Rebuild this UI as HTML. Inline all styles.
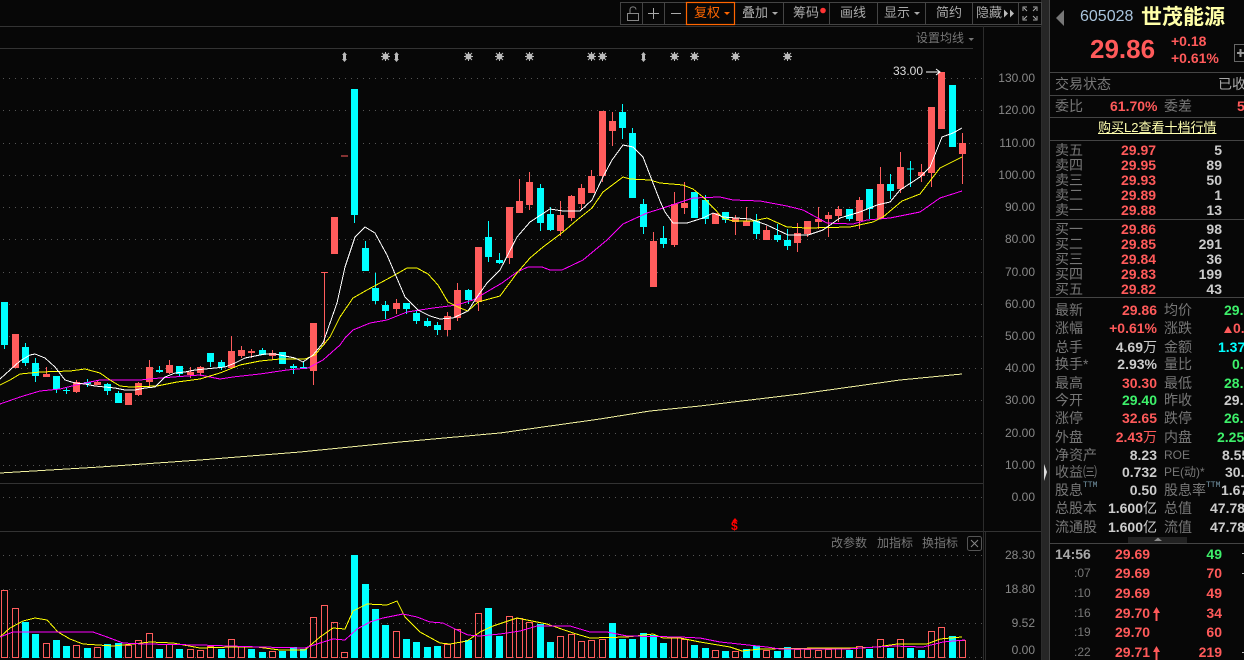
<!DOCTYPE html>
<html><head><meta charset="utf-8"><title>605028</title>
<style>
html,body{margin:0;padding:0;background:#070707;width:1244px;height:660px;overflow:hidden}
body{position:relative;font-family:"Liberation Sans","WenQuanYi Zen Hei","Noto Sans CJK SC",sans-serif;font-size:14px;color:#777}
svg{position:absolute;left:0;top:0}
span{position:absolute;line-height:16px;white-space:nowrap}
.l{left:1055px;color:#777;letter-spacing:0}
.m{left:1164px;color:#777}
.r{color:#ff5a5a;font-weight:bold}
.w{color:#ccc;font-weight:bold}
.g{color:#3df06a;font-weight:bold}
.c{color:#0ff;font-weight:bold}
.a{font-size:12px;color:#888;right:209px}
.t{font-size:13px;color:#aaa}
.p{left:1121px;font-size:14px}
.q{right:22px}
.v{right:87px}
.b{left:1115px;font-size:14px}
.u{font-size:12px;color:#777}
.ttm{font-size:8px;color:#79a;font-family:"Liberation Mono",monospace}
polyline{shape-rendering:crispEdges}
</style></head><body>
<svg width="1244" height="660" viewBox="0 0 1244 660" fill="none">
<defs>
<g id="s" stroke="#bbb" stroke-width="1"><circle r="3" fill="#bbb" stroke="none"/><path d="M-4.500 0H4.500M0-4.500V4.500M-3.500-3.500L3.500 3.500M-3.500 3.500L3.500-3.500"/></g>
<g id="d" fill="#bbb"><path d="M0-5L2.500-2H1.500V2H2.500L0 5L-2.500 2H-1.500V-2H-2.500Z"/></g>
</defs>
<!-- frame -->
<path d="M0 26.500H1042M0 48.500H973M0 483.500H983M0 531.500H1042" stroke="#333"/>
<path d="M983.500 26V660M985.500 532V660M1041.500 0V660" stroke="#2c2c2c"/>
<rect x="1042" y="0" width="7" height="660" fill="#262626"/>
<path d="M1049.500 0V660" stroke="#444"/>
<path d="M1044 464L1047 472L1044 481Z" fill="#ddd"/>
<!-- grid -->
<path d="M3 78.500H985M3 110.500H985M3 143.500H985M3 175.500H985M3 207.500H985M3 239.500H985M3 272.500H985M3 304.500H985M3 336.500H985M3 368.500H985M3 400.500H985M3 433.500H985M3 465.500H985M3 497.500H985M3 555.500H985M3 589.500H985M3 623.500H985M3 657.500H985" stroke="#555" stroke-dasharray="1 5"/>
<!-- long MA -->
<polyline stroke="#f2f2a0" points="0,473 100,467 200,460 300,452 400,442 500,433 600,419 650,411 700,406 800,394 900,380 962,374"/>
<!-- candles -->
<g shape-rendering="crispEdges">
<path stroke="#ff5c5c" d="M46.500 367V377M76.500 380V393M97.500 380V385M138.500 382V396M149.500 360V386M169.500 360V374M190.500 367V378M200.500 366V376M231.500 336V369M241.500 346V358M251.500 349V358M272.500 350V360M313.500 323V385M324.500 272V345M396.500 299V314M447.500 312V336M457.500 283V321M478.500 247V311M509.500 207V264M519.500 179V213M529.500 172V210M560.500 201V236M571.500 195V221M581.500 184V210M591.500 170V176M602.500 176V182M612.500 112V146M653.500 232V241M674.500 192V247M684.500 182V214M735.500 215V235M746.500 207V221M766.500 226V230M797.500 223V252M807.500 234V237M818.500 207V229M828.500 212V237M838.500 206V222M859.500 197V229M880.500 167V184M900.500 152V193M921.500 164V182M931.500 173V187M962.500 133V184"/>
<path stroke="#0ff" d="M4.500 345V349M25.500 343V366M35.500 358V382M56.500 389V393M66.500 388V394M87.500 379V387M107.500 383V395M118.500 391V393M159.500 366V373M179.500 374V376M210.500 362V367M221.500 360V370M262.500 348V350M293.500 364V374M303.500 362V367M354.500 215V223M365.500 241V248M375.500 273V304M385.500 301V319M406.500 309V314M416.500 310V324M427.500 318V327M437.500 322V335M468.500 289V304M488.500 221V262M499.500 253V264M540.500 184V231M550.500 207V231M622.500 104V139M632.500 128V133M643.500 199V234M663.500 226V248M705.500 195V224M725.500 220V223M756.500 214V239M777.500 224V242M787.500 229V250M849.500 219V221M869.500 209V219M890.500 174V199M910.500 161V187"/>
<path stroke="#ff5c5c" stroke-width="7" d="M15.500 334V368M46.500 374V377M76.500 382V392M97.500 382V385M128.500 393V405M138.500 383V395M149.500 367V382M169.500 365V373M190.500 372V375M200.500 367V373M231.500 351V368M241.500 350V356M251.500 351V353M272.500 353V356M313.500 323V371M324.500 272V273M334.500 217V254M344.500 155.500V156.500M396.500 303V309M447.500 316V330M457.500 290V318M478.500 247V302M509.500 207V258M519.500 201V213M529.500 182V205M560.500 215V231M571.500 196V218M581.500 188V204M591.500 176V193M602.500 111V176M612.500 121V131M653.500 241V287M674.500 204V245M684.500 203V208M715.500 213V224M735.500 218V222M746.500 221V226M766.500 230V240M797.500 233V243M807.500 221V234M818.500 219V222M828.500 215V219M838.500 209V216M859.500 200V221M880.500 184V219M900.500 167V189M921.500 172V176M931.500 107V173M941.500 72V129M962.500 143V154"/>
<path stroke="#0ff" stroke-width="7" d="M4.500 302V345M25.500 347V363M35.500 363V376M56.500 376V389M66.500 390V391M87.500 382V384M107.500 384V391M118.500 393V403M159.500 370V372M179.500 366V374M210.500 353V362M221.500 362V367M262.500 350V355M282.500 352V364M293.500 366V368M303.500 367V369M354.500 89V215M365.500 248V271M375.500 288V301M385.500 305V311M406.500 303V309M416.500 313V321M427.500 321V326M437.500 325V330M468.500 290V300M488.500 237V257M499.500 260V263M540.500 188V223M550.500 214V230M622.500 112V128M632.500 133V198M643.500 204V227M663.500 238V244M694.500 192V218M705.500 200V219M725.500 212V220M756.500 221V234M777.500 235V240M787.500 240V246M849.500 209V219M869.500 189V209M890.500 184V191M910.500 168.500V169.500M952.500 85V147"/>
</g>
<!-- MAs -->
<polyline stroke="#ff00ff" points="0,404 20,397 40,391 60,389 80,384 100,380 140,380 160,378 200,375 220,379 233,377 260,374 287,370 308,368 323,360 340,345 345,338 353,330 370,323 387,320 407,312 433,308 457,305 473,300 502,283 517,272 528,267 542,267 550,270 562,270 583,260 607,240 623,224 647,213 660,209 693,198 720,197 733,200 760,201 787,206 803,210 827,223 853,224 867,220 890,218 920,212 940,198 962,191"/>
<polyline stroke="#ffff00" points="0,385 10,380 20,374 40,372 70,371 85,369 100,373 110,380 120,386 130,387 157,386 177,382 200,379 220,373 240,365 260,361 280,359 305,359 315,355 330,337 340,317 353,298 367,290 393,276 407,268 417,268 428,274 438,285 448,302 460,308 468,311 478,302 500,296 517,273 530,258 543,247 563,232 577,220 592,208 603,192 623,177 630,179 650,180 660,183 683,185 693,189 703,197 723,218 733,221 753,221 767,218 787,227 807,228 850,227 873,222 883,217 902,201 920,194 940,168 962,157"/>
<polyline stroke="#fff" points="0,379 10,370 20,361 30,355 35,354 45,358 55,367 65,380 75,383 85,384 95,386 105,387 115,388 125,390 135,390 145,388 155,387 165,377 175,373 185,372 195,370 205,369 215,368 225,367 235,363 245,358 255,356 265,354 275,354 285,356 295,358 303,362 313,355 323,343 330,323 337,303 345,267 355,237 365,227 375,233 387,255 405,297 418,310 430,316 440,319 453,318 468,311 477,297 487,283 500,270 517,237 530,222 550,209 563,211 580,211 592,200 603,177 612,160 623,145 633,147 643,157 653,183 660,201 665,212 673,223 687,223 703,218 713,213 723,217 750,219 767,225 788,235 808,235 823,230 840,218 860,212 877,205 890,202 900,190 920,177 930,167 942,137 953,133 962,128"/>
<!-- markers -->
<use href="#d" x="344.500" y="57"/><use href="#s" x="385.500" y="56.500"/><use href="#d" x="396.500" y="57"/><use href="#s" x="468.500" y="56.500"/><use href="#s" x="499.500" y="56.500"/><use href="#s" x="529.500" y="56.500"/><use href="#s" x="591.500" y="56.500"/><use href="#s" x="602.500" y="56.500"/><use href="#d" x="643.500" y="57"/><use href="#s" x="674.500" y="56.500"/><use href="#s" x="694.500" y="56.500"/><use href="#s" x="735.500" y="56.500"/><use href="#s" x="787.500" y="56.500"/>
<path d="M926 72H940M936 69L940 72L936 75" stroke="#fff"/>
<!-- volume -->
<g shape-rendering="crispEdges">
<path stroke="#0ff" stroke-width="7" d="M25.500 622V658M35.500 634V658M56.500 640V658M66.500 646V658M87.500 648V658M107.500 644V658M118.500 643V658M159.500 649V658M179.500 649V658M221.500 649V658M251.500 649V658M262.500 652V658M282.500 651V658M293.500 647V658M303.500 649V658M354.500 555V658M365.500 584V658M375.500 609V658M385.500 625V658M406.500 639V658M416.500 642V658M427.500 647V658M437.500 646V658M468.500 640V658M488.500 608V658M499.500 636V658M540.500 624V658M550.500 642V658M612.500 623V658M622.500 639V658M632.500 639V658M643.500 633V658M653.500 635V658M663.500 643V658M694.500 645V658M705.500 648V658M725.500 651V658M746.500 649V658M756.500 646V658M777.500 651V658M787.500 647V658M849.500 650V658M869.500 649V658M890.500 648V658M910.500 648V658M921.500 650V658M952.500 636V658"/>
<path stroke="#ff5c5c" d="M1.500 590.500h6V657.500h-6zM12.500 608.500h6V657.500h-6zM43.500 643.500h6V657.500h-6zM73.500 645.500h6V657.500h-6zM94.500 647.500h6V657.500h-6zM125.500 645.500h6V657.500h-6zM135.500 640.500h6V657.500h-6zM146.500 633.500h6V657.500h-6zM166.500 644.500h6V657.500h-6zM187.500 649.500h6V657.500h-6zM197.500 650.500h6V657.500h-6zM207.500 646.500h6V657.500h-6zM228.500 639.500h6V657.500h-6zM238.500 646.500h6V657.500h-6zM269.500 651.500h6V657.500h-6zM310.500 617.500h6V657.500h-6zM321.500 605.500h6V657.500h-6zM331.500 622.500h6V657.500h-6zM341.500 652.500h6V657.500h-6zM393.500 631.500h6V657.500h-6zM444.500 644.500h6V657.500h-6zM454.500 629.500h6V657.500h-6zM475.500 613.500h6V657.500h-6zM506.500 616.500h6V657.500h-6zM516.500 618.500h6V657.500h-6zM526.500 622.500h6V657.500h-6zM557.500 636.500h6V657.500h-6zM568.500 634.500h6V657.500h-6zM578.500 641.500h6V657.500h-6zM588.500 640.500h6V657.500h-6zM599.500 639.500h6V657.500h-6zM671.500 637.500h6V657.500h-6zM681.500 639.500h6V657.500h-6zM712.500 650.500h6V657.500h-6zM732.500 651.500h6V657.500h-6zM763.500 650.500h6V657.500h-6zM794.500 649.500h6V657.500h-6zM804.500 649.500h6V657.500h-6zM815.500 650.500h6V657.500h-6zM825.500 649.500h6V657.500h-6zM835.500 648.500h6V657.500h-6zM856.500 646.500h6V657.500h-6zM877.500 639.500h6V657.500h-6zM897.500 639.500h6V657.500h-6zM928.500 631.500h6V657.500h-6zM938.500 627.500h6V657.500h-6zM959.500 640.500h6V657.500h-6z"/>
</g>
<polyline stroke="#ffff00" points="0,637 10,628 23,621 35,618 47,620 58,632 70,639 83,644 113,646 133,644 150,642 173,643 200,648 233,647 257,647 280,650 305,650 320,637 333,628 345,629 353,611 367,604 387,605 397,601 405,617 420,632 440,643 450,644 467,641 480,632 493,626 517,618 547,624 573,633 590,638 627,637 653,634 663,638 680,638 700,642 730,647 742,651 760,649 823,648 857,648 877,647 897,644 927,644 940,639 962,637"/>
<polyline stroke="#ff00ff" points="0,637 13,632 93,632 107,637 123,643 143,644 200,645 260,647 305,648 320,643 333,639 345,640 357,629 370,622 383,618 403,614 417,617 430,622 443,623 457,630 468,635 480,636 500,634 520,631 537,626 570,626 590,632 607,632 627,636 680,637 700,638 720,642 767,647 780,649 847,649 877,647 893,646 923,647 943,642 965,640"/>
<!-- toolbar -->
<path d="M620.500 2.500H1041.500V24.500H620.500ZM642.500 3V24M664.500 3V24M783.500 3V24M829.500 3V24M877.500 3V24M925.500 3V24M972.500 3V24M1018.500 3V24" stroke="#444"/>
<rect x="686.500" y="2.500" width="48" height="22" stroke="#f60" stroke-width="1.200" fill="#070707"/>
<path d="M627.500 13.500H638.500V20.500H627.500ZM630 13V9.500C630 6 636 6 636 9.500" stroke="#888"/>
<path d="M648 13.500H659M653.500 8V19M671 13.500H681" stroke="#aaa"/>
<path d="M724 12L730 12L727 15Z" fill="#f60"/><path d="M772 12L778 12L775 15Z" fill="#aaa"/><path d="M914 12L920 12L917 15Z" fill="#aaa"/>
<circle cx="823" cy="10.500" r="2.800" fill="#f33"/>
<path d="M1004 9.500L1008 13.500L1004 17.500ZM1010 9.500L1014 13.500L1010 17.500Z" fill="#bbb"/>
<path d="M1023 11V7H1027M1037 11V7H1033M1023 16V20H1027M1037 16V20H1033M1024 8L1027 11M1036 8L1033 11M1024 19L1027 16M1036 19L1033 16" stroke="#aaa"/>
<path d="M968.500 38L974 38L971.200 41Z" fill="#777"/>
<!-- X btn -->
<rect x="967.500" y="536.500" width="14" height="14" rx="2" stroke="#555"/>
<path d="M971 540L978 547M978 540L971 547" stroke="#888"/>
<!-- right panel lines -->
<path d="M1050 72.500H1244M1050 95.500H1244M1050 117.500H1244M1050 140.500H1244M1050 219.500H1244M1050 297.500H1244M1050 543.500H1244" stroke="#444"/>
<path d="M1064 10V26L1056 18Z" fill="#777"/>
<rect x="1234.500" y="44.500" width="12" height="17" stroke="#666"/>
<path d="M1237 53H1244M1240.500 49V57" stroke="#999" stroke-width="2"/>
<rect x="1128" y="537" width="59" height="6" fill="#222"/><path d="M1154 541L1158 537.500L1162 541Z" fill="#888"/>
<path d="M1156.500 613V621" stroke="#ff5a5a" stroke-width="2"/><path d="M1153 613L1156.500 607L1160 613Z" fill="#ff5a5a"/>
<path d="M1156.500 652V660" stroke="#ff5a5a" stroke-width="2"/><path d="M1153 652L1156.500 646L1160 652Z" fill="#ff5a5a"/>
<path d="M1224 333H1232L1228 326Z" fill="#ff5a5a"/>
<path d="M1242 553.500H1244M1242 573.500H1244M1242 652.500H1244" stroke="#bbb"/>
<path d="M735 518L738 521.500H732Z" fill="#f00"/>
</svg>

<span class="t" style="left:694px;top:5px;color:#f60">复权</span>
<span class="t" style="left:742px;top:5px">叠加</span>
<span class="t" style="left:793px;top:5px">筹码</span>
<span class="t" style="left:840px;top:5px">画线</span>
<span class="t" style="left:884px;top:5px">显示</span>
<span class="t" style="left:936px;top:5px">简约</span>
<span class="t" style="left:976px;top:5px">隐藏</span>
<span style="left:916px;top:30px;font-size:12px;color:#777">设置均线</span>

<span class="a" style="top:70px">130.00</span><span class="a" style="top:102px">120.00</span><span class="a" style="top:135px">110.00</span><span class="a" style="top:167px">100.00</span>
<span class="a" style="top:199px">90.00</span><span class="a" style="top:231px">80.00</span><span class="a" style="top:264px">70.00</span><span class="a" style="top:296px">60.00</span>
<span class="a" style="top:328px">50.00</span><span class="a" style="top:360px">40.00</span><span class="a" style="top:392px">30.00</span><span class="a" style="top:425px">20.00</span>
<span class="a" style="top:457px">10.00</span><span class="a" style="top:489px">0.00</span>
<span class="a" style="top:547px">28.30</span><span class="a" style="top:581px">18.80</span><span class="a" style="top:615px">9.52</span><span class="a" style="top:642px">0.00</span>

<span style="left:893px;top:63px;font-size:12px;color:#ddd">33.00</span>
<span style="left:731px;top:518px;font-size:12px;color:#f00;font-weight:bold">$</span>
<span class="u" style="left:831px;top:535px">改参数</span><span class="u" style="left:877px;top:535px">加指标</span><span class="u" style="left:922px;top:535px">换指标</span>

<span style="left:1080px;top:9px;font-size:16px;color:#a9c4dc">605028</span>
<span style="left:1141px;top:7px;font-size:21px;line-height:22px;font-weight:bold;color:#ffffa8">世茂能源</span>
<span class="r" style="left:1090px;top:36px;font-size:26px;line-height:26px;font-weight:bold">29.86</span>
<span class="r" style="left:1171px;top:33px">+0.18</span>
<span class="r" style="left:1171px;top:50px">+0.61%</span>

<span class="l" style="top:76px">交易状态</span><span style="left:1218px;top:76px;color:#aaa">已收</span>
<span class="l" style="top:98px">委比</span><span class="r" style="left:1110px;top:98px">61.70%</span><span class="m" style="top:98px">委差</span><span class="r" style="left:1237px;top:98px">5</span>
<span style="left:1098px;top:120px;font-size:13px;color:#ffffb0;text-decoration:underline">购买L2查看十档行情</span>

<span class="l" style="top:142px">卖五</span><span class="r p" style="top:142px">29.97</span><span class="w q" style="top:142px">5</span>
<span class="l" style="top:157px">卖四</span><span class="r p" style="top:157px">29.95</span><span class="w q" style="top:157px">89</span>
<span class="l" style="top:172px">卖三</span><span class="r p" style="top:172px">29.93</span><span class="w q" style="top:172px">50</span>
<span class="l" style="top:187px">卖二</span><span class="r p" style="top:187px">29.89</span><span class="w q" style="top:187px">1</span>
<span class="l" style="top:202px">卖一</span><span class="r p" style="top:202px">29.88</span><span class="w q" style="top:202px">13</span>
<span class="l" style="top:221px">买一</span><span class="r p" style="top:221px">29.86</span><span class="w q" style="top:221px">98</span>
<span class="l" style="top:236px">买二</span><span class="r p" style="top:236px">29.85</span><span class="w q" style="top:236px">291</span>
<span class="l" style="top:251px">买三</span><span class="r p" style="top:251px">29.84</span><span class="w q" style="top:251px">36</span>
<span class="l" style="top:266px">买四</span><span class="r p" style="top:266px">29.83</span><span class="w q" style="top:266px">199</span>
<span class="l" style="top:281px">买五</span><span class="r p" style="top:281px">29.82</span><span class="w q" style="top:281px">43</span>

<span class="l" style="top:302px">最新</span><span class="r v" style="top:302px">29.86</span><span class="m" style="top:302px">均价</span><span class="g" style="left:1224px;top:302px">29.</span>
<span class="l" style="top:320px">涨幅</span><span class="r v" style="top:320px">+0.61%</span><span class="m" style="top:320px">涨跌</span><span class="r" style="left:1233px;top:320px">0.</span>
<span class="l" style="top:339px">总手</span><span class="w v" style="top:339px">4.69<b style="font-weight:normal">万</b></span><span class="m" style="top:339px">金额</span><span class="c" style="left:1218px;top:339px">1.37</span>
<span class="l" style="top:356px">换手*</span><span class="w v" style="top:356px">2.93%</span><span class="m" style="top:356px">量比</span><span class="g" style="left:1232px;top:356px">0.</span>
<span class="l" style="top:375px">最高</span><span class="r v" style="top:375px">30.30</span><span class="m" style="top:375px">最低</span><span class="g" style="left:1224px;top:375px">28.</span>
<span class="l" style="top:392px">今开</span><span class="g v" style="top:392px">29.40</span><span class="m" style="top:392px">昨收</span><span class="w" style="left:1224px;top:392px">29.</span>
<span class="l" style="top:410px">涨停</span><span class="r v" style="top:410px">32.65</span><span class="m" style="top:410px">跌停</span><span class="g" style="left:1224px;top:410px">26.</span>
<span class="l" style="top:429px">外盘</span><span class="r v" style="top:429px">2.43<b style="font-weight:normal">万</b></span><span class="m" style="top:429px">内盘</span><span class="g" style="left:1217px;top:429px">2.25</span>
<span class="l" style="top:447px">净资产</span><span class="w v" style="top:447px">8.23</span><span class="m" style="top:447px;font-size:12px">ROE</span><span class="w" style="left:1222px;top:447px">8.55</span>
<span class="l" style="top:464px">收益㈢</span><span class="w v" style="top:464px">0.732</span><span class="m" style="top:464px;font-size:12px">PE(动)*</span><span class="w" style="left:1225px;top:464px">30.</span>
<span class="l" style="top:482px">股息</span><span class="ttm" style="left:1083px;top:478px">TTM</span><span class="w v" style="top:482px">0.50</span><span class="m" style="top:482px">股息率</span><span class="ttm" style="left:1206px;top:478px">TTM</span><span class="w" style="left:1221px;top:482px">1.67</span>
<span class="l" style="top:500px">总股本</span><span class="w v" style="top:500px">1.600<b style="font-weight:normal">亿</b></span><span class="m" style="top:500px">总值</span><span class="w" style="left:1210px;top:500px">47.78</span>
<span class="l" style="top:519px">流通股</span><span class="w v" style="top:519px">1.600<b style="font-weight:normal">亿</b></span><span class="m" style="top:519px">流值</span><span class="w" style="left:1210px;top:519px">47.78</span>

<span class="w" style="left:1055px;top:546px;color:#aaa">14:56</span><span class="r b" style="top:546px">29.69</span><span class="g q" style="top:546px">49</span>
<span style="left:1074px;top:565px;font-size:12px;color:#777">:07</span><span class="r b" style="top:565px">29.69</span><span class="r q" style="top:565px">70</span>
<span style="left:1074px;top:585px;font-size:12px;color:#777">:10</span><span class="r b" style="top:585px">29.69</span><span class="r q" style="top:585px">49</span>
<span style="left:1074px;top:605px;font-size:12px;color:#777">:16</span><span class="r b" style="top:605px">29.70</span><span class="r q" style="top:605px">34</span>
<span style="left:1074px;top:624px;font-size:12px;color:#777">:19</span><span class="r b" style="top:624px">29.70</span><span class="r q" style="top:624px">60</span>
<span style="left:1074px;top:644px;font-size:12px;color:#777">:22</span><span class="r b" style="top:644px">29.71</span><span class="r q" style="top:644px">219</span>
</body></html>
